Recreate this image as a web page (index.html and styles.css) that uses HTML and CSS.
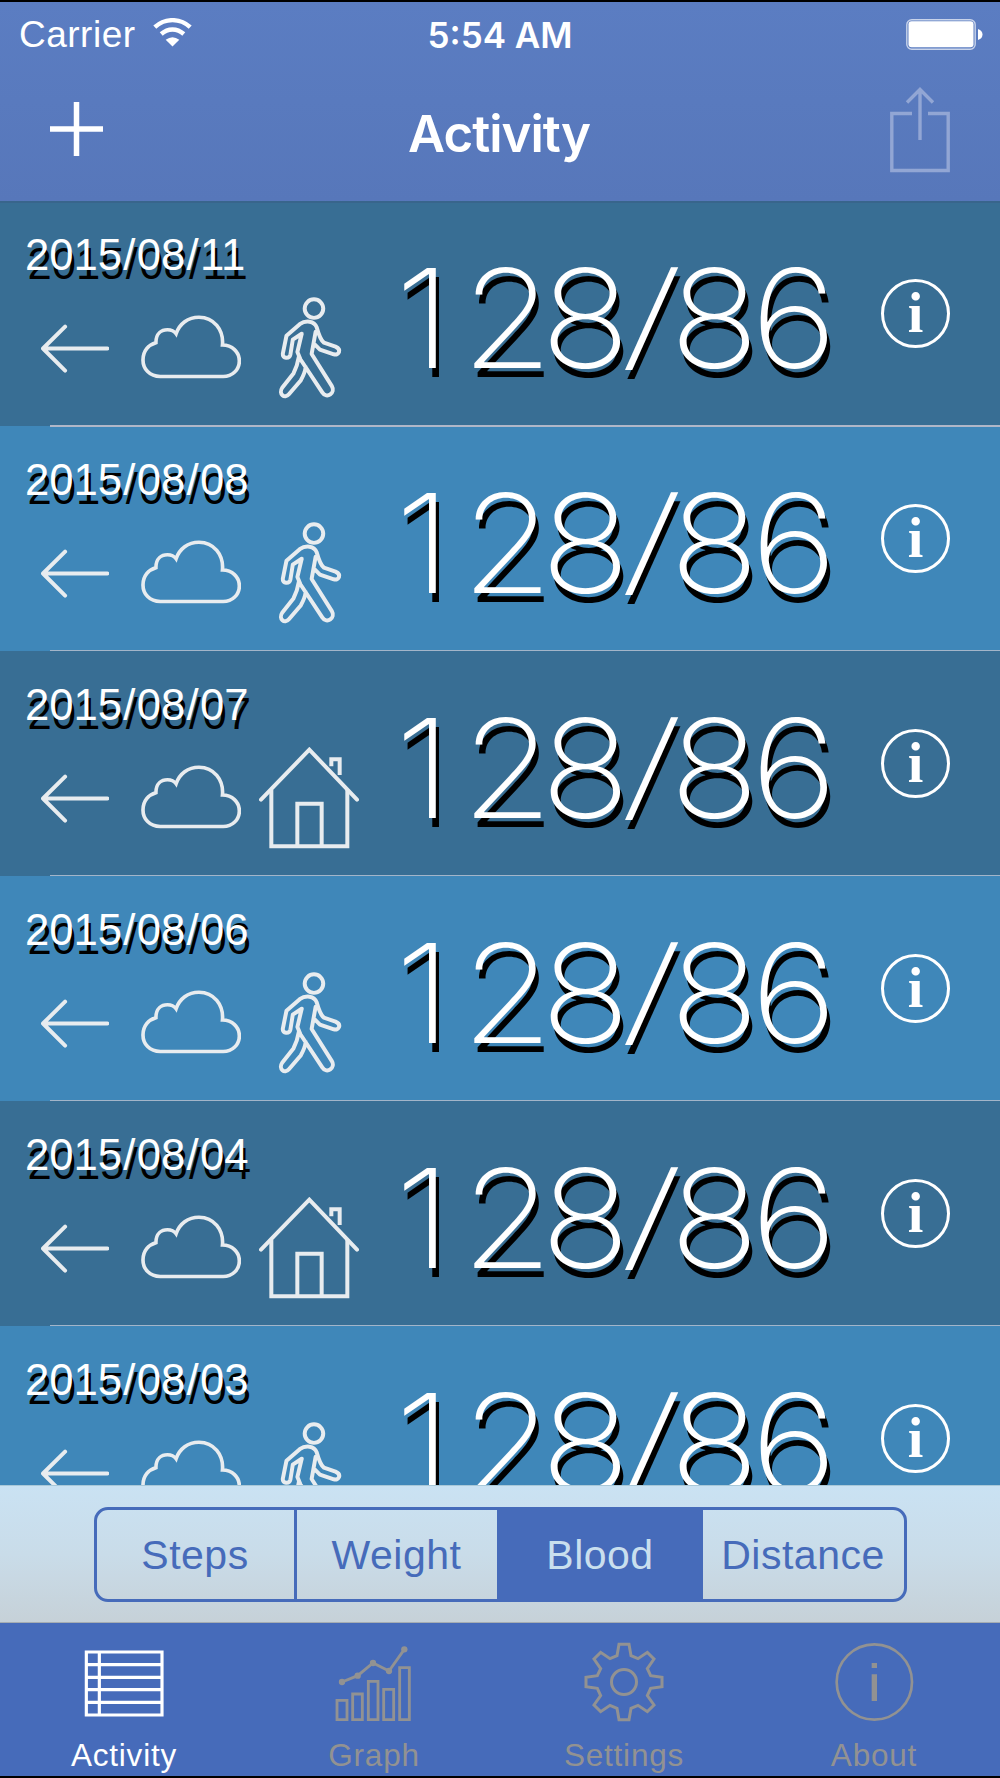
FILE: index.html
```
<!DOCTYPE html>
<html lang="en">
<head>
<meta charset="utf-8">
<title>Activity</title>
<link rel="stylesheet" href="styles.css">
</head>
<body>
<svg class="defs" width="0" height="0">
  <symbol id="arrow" viewBox="122 372 206 146"><path d="M323 445H128M195 379L128 445L195 512" fill="none" stroke="#e8ecef" stroke-width="12" stroke-linecap="round" stroke-linejoin="round"/></symbol>
  <symbol id="cloud" viewBox="422 345 302 192"><path d="M480 530C448 530 428 507 428 480C428 453 445 434 467 428C467 400 484 389 502 389C514 389 522 393 528 401C538 371 564 351 597 351C642 351 672 389 668 435C697 435 719 456 719 483C719 510 698 530 670 530Z" fill="none" stroke="#e8ecef" stroke-width="11"/></symbol>
  <symbol id="walk" viewBox="832 292 192 308"><g fill="none" stroke="#e8ecef" stroke-width="12" stroke-linejoin="round" stroke-linecap="round"><circle cx="943" cy="327" r="28"/><path d="M906 403L879 421L872 465C869 480 847 479 849 463L860 409L900 374C918 361 944 364 951 383C958 408 965 424 973 430L1008 442C1028 451 1018 469 1003 465L961 451L946 436M948 397L936 464L997 561C1009 581 982 602 968 580L902 480L893 458L906 403M898 470Q893 500 881 523L847 566C835 584 854 602 868 585L903 544Q916 521 918 503"/></g></symbol>
  <symbol id="house" viewBox="777 264 300 304"><g fill="none" stroke="#e8ecef" stroke-width="12"><path d="M783 421L928 271L1071 421" stroke-linecap="round"/><path d="M814 392V561H1042V392M892 560V433H965V560M994 321V300H1019V347"/></g></symbol>
</svg>
<div class="phone">
  <header class="header">
    <div class="status">
      <div class="carrier"><span>Carrier</span>
        <svg width="39" height="29" viewBox="0 0 39 29"><g fill="none" stroke="#fff" stroke-width="4.4"><path d="M1.8 9.2C12-.2 27-.2 37.2 9.2"/><path d="M8.2 16C15 9.9 24 9.9 30.8 16"/></g><path d="M12.7 21.8Q19.5 16.8 26.3 21.8L19.5 28.5Z" fill="#fff"/></svg>
      </div>
      <div class="time">5:54 AM</div>
      <svg class="battery" width="78" height="31" viewBox="0 0 78 31"><rect x=".8" y=".8" width="68.4" height="29.4" rx="5" fill="none" stroke="#c8d3ea" stroke-width="1.4"/><rect x="2.5" y="2.3" width="65" height="26" rx="3" fill="#fff"/><path d="M72 10Q76.5 11.5 76.5 15.500Q76.500 19.500 72 21Z" fill="#fff"/></svg>
    </div>
    <div class="nav">
      <svg class="add" width="53" height="54" viewBox="0 0 53 54"><path d="M0 27H53M26.500 0V54" stroke="#fff" stroke-width="5.500"/></svg>
      <h1>Activity</h1>
      <svg class="share" width="60" height="86" viewBox="0 0 60 86"><path d="M22 26.500H1.800V83.500H58.200V26.500H38M30 53V3M17 15.500L30 2.500L43 15.500" fill="none" stroke="#92a6d4" stroke-width="3.400"/></svg>
    </div>
  </header>
  <main class="list">
    <section class="row"><div class="left"><div class="date">2015<b>/</b>08<b>/</b>11</div><div class="icons"><svg class="ar"><use href="#arrow"/></svg><svg class="cl"><use href="#cloud"/></svg><svg class="act"><use href="#walk"/></svg></div></div><div class="value"><span class="one">1</span><span>2</span><span>8</span><span class="slash">/</span><span>8</span><span>6</span></div><div class="info">i</div></section>
    <section class="row"><div class="left"><div class="date">2015<b>/</b>08<b>/</b>08</div><div class="icons"><svg class="ar"><use href="#arrow"/></svg><svg class="cl"><use href="#cloud"/></svg><svg class="act"><use href="#walk"/></svg></div></div><div class="value"><span class="one">1</span><span>2</span><span>8</span><span class="slash">/</span><span>8</span><span>6</span></div><div class="info">i</div></section>
    <section class="row"><div class="left"><div class="date">2015<b>/</b>08<b>/</b>07</div><div class="icons"><svg class="ar"><use href="#arrow"/></svg><svg class="cl"><use href="#cloud"/></svg><svg class="act"><use href="#house"/></svg></div></div><div class="value"><span class="one">1</span><span>2</span><span>8</span><span class="slash">/</span><span>8</span><span>6</span></div><div class="info">i</div></section>
    <section class="row"><div class="left"><div class="date">2015<b>/</b>08<b>/</b>06</div><div class="icons"><svg class="ar"><use href="#arrow"/></svg><svg class="cl"><use href="#cloud"/></svg><svg class="act"><use href="#walk"/></svg></div></div><div class="value"><span class="one">1</span><span>2</span><span>8</span><span class="slash">/</span><span>8</span><span>6</span></div><div class="info">i</div></section>
    <section class="row"><div class="left"><div class="date">2015<b>/</b>08<b>/</b>04</div><div class="icons"><svg class="ar"><use href="#arrow"/></svg><svg class="cl"><use href="#cloud"/></svg><svg class="act"><use href="#house"/></svg></div></div><div class="value"><span class="one">1</span><span>2</span><span>8</span><span class="slash">/</span><span>8</span><span>6</span></div><div class="info">i</div></section>
    <section class="row"><div class="left"><div class="date">2015<b>/</b>08<b>/</b>03</div><div class="icons"><svg class="ar"><use href="#arrow"/></svg><svg class="cl"><use href="#cloud"/></svg><svg class="act"><use href="#walk"/></svg></div></div><div class="value"><span class="one">1</span><span>2</span><span>8</span><span class="slash">/</span><span>8</span><span>6</span></div><div class="info">i</div></section>
  </main>
  <div class="filter">
    <div class="segments"><span>Steps</span><span>Weight</span><span class="on">Blood</span><span>Distance</span></div>
  </div>
  <nav class="tabs">
    <div class="tab active"><svg width="80" height="80" viewBox="253 517 240 240"><path d="M260 547H487V736H260ZM299 547V736M260 585H487M260 623H487M260 660H487M260 698H487" fill="none" stroke="#fff" stroke-width="9.500"/></svg><span>Activity</span></div>
    <div class="tab"><svg width="80" height="80" viewBox="1003 517 240 240"><g fill="none" stroke="#929292" stroke-width="8.500"><path d="M1012 692H1042V750H1012ZM1059 673H1088V750H1059ZM1106 635H1135V750H1106ZM1152 659H1182V750H1152ZM1200 594H1229V750H1200Z"/><path d="M1027 637L1074 618L1120 580L1168 604L1214 539"/></g><g fill="#929292"><circle cx="1027" cy="637" r="9.500"/><circle cx="1074" cy="618" r="9.500"/><circle cx="1120" cy="580" r="9.500"/><circle cx="1168" cy="604" r="9.500"/><circle cx="1214" cy="539" r="9.500"/></g></svg><span>Graph</span></div>
    <div class="tab"><svg width="80" height="80" viewBox="253 517 240 240"><g fill="none" stroke="#929292" stroke-width="9"><path d="M358 524H388L394 558L415 567L443 548L463 568L443 597L453 618L487 623V651L453 656L443 678L463 706L443 726L415 707L394 716L388 750H358L352 716L331 707L303 726L283 706L303 678L293 656L259 651V623L293 618L303 597L283 568L303 548L331 567L352 558Z"/><circle cx="373" cy="637" r="37.500"/></g></svg><span>Settings</span></div>
    <div class="tab"><svg width="80" height="80" viewBox="1003 517 240 240"><circle cx="1124" cy="637" r="113" fill="none" stroke="#929292" stroke-width="8"/><path d="M1116 580H1132V595H1116ZM1116 614H1132V694H1116Z" fill="#929292"/></svg><span>About</span></div>
  </nav>
</div>
</body>
</html>
```
FILE: styles.css
```
* { box-sizing: border-box; }
body { margin: 0; background: #000; font-family: "Liberation Sans", Arial, sans-serif; }
.defs { display: block; }
.phone { width: 1000px; height: 1778px; padding: 2px 0; display: flex; flex-direction: column; overflow: hidden; }
.phone svg { flex: none; }
b { font-weight: inherit; }

.header { height: 199px; flex: none; background: linear-gradient(#5b7dc2, #5777ba); color: #fff; }
.status { height: 65px; padding: 1px 16px 0 19px; display: grid; grid-template-columns: 1fr auto 1fr; align-items: center; }
.carrier { display: flex; align-items: center; gap: 17px; font-size: 37px; letter-spacing: .5px; }
.carrier svg { margin-top: -5px; }
.time { margin: 0 3px 0 0; font: 600 35px/1 Inter, sans-serif; letter-spacing: 0; }
.battery { justify-self: end; margin-top: -2px; }
.nav { height: 125px; padding: 0 50px; display: grid; grid-template-columns: 1fr auto 1fr; align-items: center; }
.nav h1 { margin: 8px 2px 0 0; font: 600 51px/1 Inter, sans-serif; letter-spacing: -1px; }
.add { margin-top: -1px; }
.share { justify-self: end; }

.list { height: 1284px; flex: none; overflow: hidden; }
.row { height: 225px; display: flex; color: #fff; background: #386e94; position: relative; }
.row:nth-child(even) { background: #3f87b9; }
.row::after { content: ""; position: absolute; left: 50px; right: 0; bottom: 0; height: 1px; background: #a3b5c9; }
.row:first-child { box-shadow: inset 0 2px 0 #38658c; }
.row:first-child::after { bottom: -1px; height: 2px; z-index: 1; background: #b0b7c8; }
.left { width: 390px; flex: none; padding: 29px 0 0 25px; }
.date { height: 50px; line-height: 50px; font-size: 43.600px; white-space: nowrap; text-shadow: 2.500px 9px 0 #000; }
.date b { margin: 0 1.300px; }
.icons { height: 101px; margin-top: 17.500px; padding-left: 16px; display: flex; align-items: center; }
.ar { width: 68px; height: 49px; }
.cl { width: 100px; height: 64px; margin: -2px 18px 0 32px; }
.act { width: 100px; height: 102px; }
.value { width: 470px; flex: none; padding-top: 42px; display: grid; grid-template-columns: 78px 78px 78px 51px 78px 82px; justify-items: center; font: 200 137px/150px Inter, sans-serif; text-shadow: 3px 9px 0 #000; }
.value span { transform: scaleX(1.080); }
.value .one { margin-left: -12px; }
.value .slash { transform: translate(1px, -6px) scale(1.200, .860) skewX(-3deg); text-shadow: 2.400px 10.500px 0 #000; }
.info { width: 69px; height: 69px; margin: 78px 0 0 21px; border: 3px solid #fff; border-radius: 50%; font: bold 56px/62px "Liberation Serif", serif; text-align: center; }

.filter { height: 138px; flex: none; border-top: 1px solid #a9c8d8; border-bottom: 1px solid #a5adb3; background: linear-gradient(#cae2f3, #c9dce9 50%, #c6d1d8); display: flex; align-items: center; justify-content: center; }
.segments { width: 813px; height: 95px; border: 3px solid #466bba; border-radius: 14px; overflow: hidden; display: grid; grid-template-columns: 197px 203px 206px 1fr; color: #466bba; font-size: 41px; line-height: 91px; letter-spacing: .5px; text-align: center; }
.segments span + span { border-left: 3px solid #466bba; }
.segments .on { padding-right: 2px; background: #466bba; color: #c9dfee; }
.segments .on + span { border-left: 0; }

.tabs { height: 153px; flex: none; background: #466bba; display: grid; grid-template-columns: repeat(4, 250px); color: #929292; }
.tab { display: flex; flex-direction: column; align-items: center; padding: 19px 2px 0 0; font-size: 31.500px; line-height: 36px; letter-spacing: .8px; }
.tab span { margin-top: 15px; }
.active { color: #fff; }
```
